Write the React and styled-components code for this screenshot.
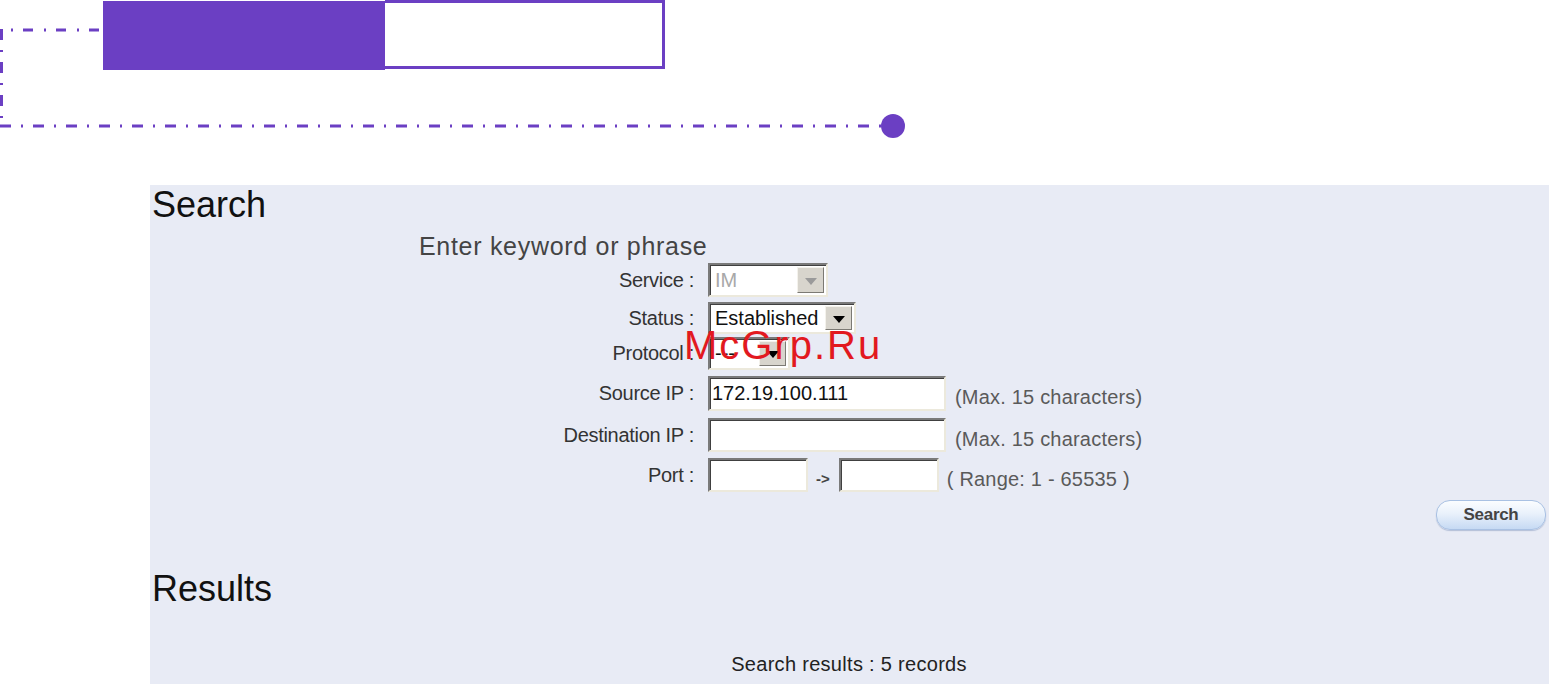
import styled, { createGlobalStyle } from "styled-components";

const GlobalStyle = createGlobalStyle`
  html, body {
    margin: 0;
    padding: 0;
    background: #fff;
  }
  body {
    font-family: "Liberation Sans", Arial, sans-serif;
  }
`;

const PURPLE = "#6b3fc3";

const Page = styled.div`
  position: relative;
  width: 1555px;
  height: 684px;
  overflow: hidden;
  background: #fff;
  font-family: "Liberation Sans", Arial, sans-serif;
`;

const Header = styled.header`
  position: relative;
  height: 185px;
`;

const Tabs = styled.div`
  display: flex;
  align-items: flex-start;
  margin-left: 103px;
`;

const FilledTab = styled.div`
  width: 282px;
  height: 69px;
  margin-top: 1px;
  background: ${PURPLE};
`;

const OutlineTab = styled.div`
  width: 277px;
  height: 63px;
  border: 3px solid ${PURPLE};
  border-left: none;
  background: #fff;
`;

const Connector = styled.svg`
  position: absolute;
  left: 0;
  top: 0;
  pointer-events: none;
`;

const Panel = styled.section`
  position: relative;
  box-sizing: border-box;
  margin-left: 150px;
  width: 1399px;
  height: 499px;
  padding: 0 3px 0 2px;
  background: #e8ebf5;
`;

const Heading = styled.h2`
  margin: ${(p) => p.$top || 0}px 0 0;
  font-size: 36px;
  line-height: 40px;
  font-weight: normal;
  color: #111;
`;

const Form = styled.div`
  margin: 6px 0 0 262px;
`;

const Intro = styled.div`
  padding-left: 5px;
  font-size: 25px;
  line-height: 30px;
  letter-spacing: 0.7px;
  color: #444;
`;

const FieldRow = styled.div`
  display: grid;
  grid-template-columns: 280px auto;
  column-gap: 14px;
  align-items: center;
  height: ${(p) => p.$h}px;
  margin-top: ${(p) => p.$gap}px;
`;

const Label = styled.div`
  text-align: right;
  font-size: 20px;
  letter-spacing: -0.3px;
  color: #333;
`;

const Field = styled.div`
  display: flex;
  align-items: center;
  height: 100%;
`;

const sunken = `
  box-sizing: border-box;
  background: #fff;
  border: 2px solid;
  border-color: #7a7a7a #ece9dc #ece9dc #7a7a7a;
  box-shadow: inset 1px 1px 0 #404040;
`;

const TextBox = styled.input`
  ${sunken}
  width: ${(p) => p.$w}px;
  height: 100%;
  margin: 0;
  padding: 0 2px;
  font-family: "Liberation Sans", Arial, sans-serif;
  font-size: 20px;
  color: #111;
  outline: none;
`;

const Dropdown = styled.div`
  ${sunken}
  display: flex;
  align-items: center;
  justify-content: space-between;
  width: ${(p) => p.$w}px;
  height: 100%;
  padding: 2px 2px 2px 5px;
`;

const DropValue = styled.span`
  font-size: 20px;
  color: ${(p) => (p.$disabled ? "#a8a8a8" : "#111")};
  white-space: nowrap;
`;

const ArrowButton = styled.span`
  display: flex;
  align-items: center;
  justify-content: center;
  box-sizing: border-box;
  width: 27px;
  height: 100%;
  background: #d8d5cd;
  border: 1px solid;
  border-color: #f4f2ec #7c7a74 #7c7a74 #f4f2ec;
  &::after {
    content: "";
    border-left: 6px solid transparent;
    border-right: 6px solid transparent;
    border-top: 7px solid ${(p) => (p.$disabled ? "#9a9a9a" : "#000")};
    margin-top: 2px;
  }
`;

const Hint = styled.span`
  margin-left: ${(p) => p.$gap || 9}px;
  padding-top: 8px;
  font-size: 20px;
  letter-spacing: 0.2px;
  color: #5a5a5a;
  white-space: nowrap;
`;

const RangeArrow = styled.span`
  margin: 6px 9px 0 8px;
  font-size: 15px;
  font-weight: bold;
  color: #444;
`;

const ButtonRow = styled.div`
  display: flex;
  justify-content: flex-end;
  margin-top: 8px;
`;

const SearchButton = styled.button`
  width: 110px;
  height: 30px;
  padding: 0;
  border: 1px solid #a9c1e3;
  border-radius: 14px;
  background: linear-gradient(#fbfdff 0%, #e9f1fb 45%, #c6daf3 100%);
  box-shadow: 0 1px 1px rgba(80, 110, 160, 0.35);
  font-family: "Liberation Sans", Arial, sans-serif;
  font-size: 17px;
  font-weight: bold;
  color: #444;
  letter-spacing: -0.3px;
`;

const Count = styled.div`
  margin-top: 43px;
  text-align: center;
  font-size: 20px;
  line-height: 24px;
  letter-spacing: 0.3px;
  color: #222;
`;

const Watermark = styled.div`
  position: absolute;
  left: 534px;
  top: 140px;
  font-size: 40px;
  line-height: 40px;
  letter-spacing: 2px;
  color: #e2191f;
  pointer-events: none;
`;

const rows = [
  { label: "Service :", h: 34, gap: 2, kind: "select", value: "IM", w: 120, disabled: true },
  { label: "Status :", h: 32, gap: 5, kind: "select", value: "Established", w: 148 },
  { label: "Protocol :", h: 33, gap: 3, kind: "select", value: "---", w: 82 },
  { label: "Source IP :", h: 35, gap: 6, kind: "text", value: "172.19.100.111", w: 238, hint: "(Max. 15 characters)" },
  { label: "Destination IP :", h: 34, gap: 7, kind: "text", value: "", w: 238, hint: "(Max. 15 characters)" },
];

function App() {
  return (
    <Page>
      <GlobalStyle />
      <Header>
        <Tabs>
          <FilledTab />
          <OutlineTab />
        </Tabs>
        <Connector width="920" height="145" viewBox="0 0 920 145">
          <g stroke={PURPLE} strokeWidth="3" fill="none">
            <line x1="-10" y1="30" x2="103" y2="30" strokeDasharray="10 11 2 10" />
            <line x1="1.5" y1="29" x2="1.5" y2="124" strokeDasharray="11 10 2 10" />
            <line x1="0" y1="126" x2="881" y2="126" strokeDasharray="11 10 2 10" />
          </g>
          <circle cx="893" cy="126" r="12" fill={PURPLE} />
        </Connector>
      </Header>

      <Panel>
        <Heading>Search</Heading>
        <Form>
          <Intro>Enter keyword or phrase</Intro>
          {rows.map((row) => (
            <FieldRow key={row.label} $h={row.h} $gap={row.gap}>
              <Label>{row.label}</Label>
              <Field>
                {row.kind === "select" ? (
                  <Dropdown $w={row.w}>
                    <DropValue $disabled={row.disabled}>{row.value}</DropValue>
                    <ArrowButton $disabled={row.disabled} />
                  </Dropdown>
                ) : (
                  <>
                    <TextBox $w={row.w} defaultValue={row.value} readOnly />
                    <Hint>{row.hint}</Hint>
                  </>
                )}
              </Field>
            </FieldRow>
          ))}
          <FieldRow $h={34} $gap={6}>
            <Label>Port :</Label>
            <Field>
              <TextBox $w={100} defaultValue="" readOnly />
              <RangeArrow>-&gt;</RangeArrow>
              <TextBox $w={100} defaultValue="" readOnly />
              <Hint $gap={8}>( Range: 1 - 65535 )</Hint>
            </Field>
          </FieldRow>
        </Form>
        <ButtonRow>
          <SearchButton>Search</SearchButton>
        </ButtonRow>
        <Heading $top={39}>Results</Heading>
        <Count>Search results : 5 records</Count>
        <Watermark>McGrp.Ru</Watermark>
      </Panel>
    </Page>
  );
}

export default App;
